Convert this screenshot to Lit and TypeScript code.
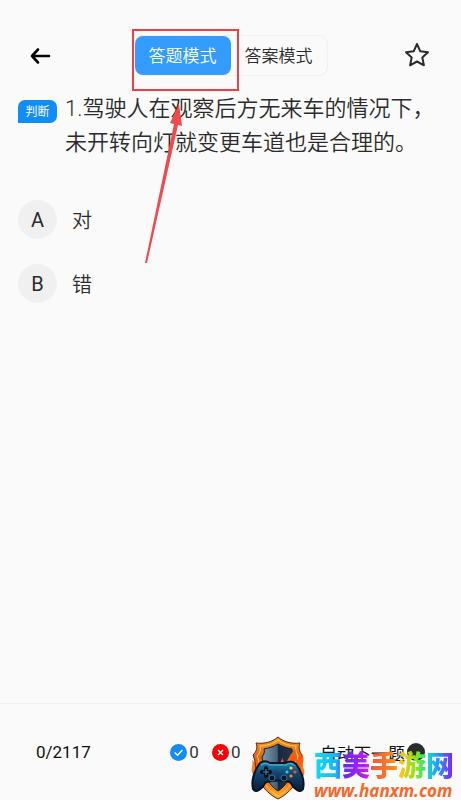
import { LitElement, html, css } from "lit";
import { customElement, state } from "lit/decorators.js";
import { classMap } from "lit/directives/class-map.js";

@customElement("site-mark")
class SiteMark extends LitElement {
  static styles = css`
    :host { display: flex; align-items: flex-end; gap: 8px; pointer-events: none; }
    svg { width: 56px; height: 64px; flex: none; }
    .words { display: flex; flex-direction: column; align-items: flex-start; gap: 1px; }
    .name {
      font: 900 28px/34px "Noto Sans CJK SC", sans-serif;
      white-space: nowrap;
      color: transparent;
      background: linear-gradient(90deg, #08dff5 0%, #12b9f7 16%, #5e2cf0 21%, #c01cf2 37%, #f5583a 42%, #ff8a1c 57%, #ffc21a 62%, #7be81c 74%, #19d8c8 81%, #1aa0ff 88%, #7a2cf5 98%);
      -webkit-background-clip: text;
      background-clip: text;
    }
    .url { font: italic 700 17px/18px "Open Sans", "Noto Sans", sans-serif; color: #f4682a; }
  `;
  render() {
    return html`
      <svg viewBox="0 0 56 64" aria-hidden="true">
        <defs>
          <linearGradient id="rim" x1="0" y1="0" x2="0" y2="1">
            <stop offset="0" stop-color="#ff9a24" /><stop offset=".35" stop-color="#d9601a" />
            <stop offset=".75" stop-color="#ff7a12" /><stop offset="1" stop-color="#ffb52c" />
          </linearGradient>
          <linearGradient id="steel" x1="0" y1="0" x2="1" y2="0">
            <stop offset="0" stop-color="#7f9db0" /><stop offset=".48" stop-color="#466277" />
            <stop offset=".5" stop-color="#152a40" /><stop offset="1" stop-color="#22384c" />
          </linearGradient>
          <linearGradient id="pad" x1="0" y1="0" x2="0" y2="1">
            <stop offset="0" stop-color="#2688b8" /><stop offset=".4" stop-color="#12466e" /><stop offset="1" stop-color="#0b1c38" />
          </linearGradient>
        </defs>
        <path d="M4 40C-1 34 4 30 2 24c5 4 4 8 8 10L46 32c4-2 4-6 7-8-2 7 4 10 0 17l-7 10H10Z" fill="#ff7a1a" />
        <path d="M28 1c6 5 13 7 22 6-2 5 0 9 2 12-2 6-1 15-4 23C44 52 36 59 28 63 20 59 12 52 8 42 5 34 6 25 3 19c3-3 5-7 3-12 9 1 16-1 22-6Z" fill="url(#rim)" stroke="#5a2416" />
        <path d="M28 4c5 4 12 6 18 6-1 4 0 7 2 10-2 5-1 14-4 21-3 9-9 15-16 19-7-4-13-10-16-19C9 34 10 25 7 20c3-3 4-6 3-10 6 0 13-2 18-6Z" fill="none" stroke="#ffd063" />
        <path d="M28 8c5 3 9 4 14 5 0 3 1 6 2 8-2 6-1 13-4 20-3 6-7 11-12 14-5-3-9-8-12-14-3-7-2-14-4-20 2-3 3-5 2-8 5-1 9-2 14-5Z" fill="url(#steel)" stroke="#18212d" />
        <path d="M25 34c0-6 7-6 7-12 2 3 2 5 1 7 6-3 4-9 13-16-2 6 2 7 1 11 3-1 4-3 5-6 4 7-1 12-2 17Z" fill="#f65d10" />
        <path d="M32 34c1-5 6-4 7-11 2 4 0 6 1 8 3-1 3-4 6-6 0 4 0 6-3 9Z" fill="#ffc232" />
        <path d="M10 27c3-2 7-2 10 0h15c4-2 8-2 11 1 5 7 9 17 7 25-3 5-9 0-13-7-7-2-16-2-24 0-4 7-10 12-13 7-2-9 2-19 7-26Z" fill="url(#pad)" stroke="#0a1428" stroke-width="2" />
        <path d="M11 29c3-2 6-2 9 0h16c3-2 7-2 9 1" fill="none" stroke="#49bde0" />
        <path d="M16 32v8M12 36h8" stroke="#081426" stroke-width="4" stroke-linecap="round" />
        <path d="M16 33v6M13 36h6" stroke="#5b8298" />
        <circle cx="22" cy="42" r="3" fill="#081426" stroke="#35738f" />
        <circle cx="34" cy="42" r="3" fill="#081426" stroke="#35738f" />
        <circle cx="41" cy="32" r="1.6" fill="#ffd23c" /><circle cx="45" cy="36" r="1.6" fill="#ff4b28" />
        <circle cx="37" cy="36" r="1.6" fill="#34c8f0" /><circle cx="41" cy="40" r="1.6" fill="#ff8a22" />
      </svg>
      <div class="words"><span class="name">西美手游网</span><span class="url">www.hanxm.com</span></div>
    `;
  }
}

@customElement("app-root")
class AppRoot extends LitElement {
  @state() private mode = 0;

  static styles = css`
    :host {
      display: flex; flex-direction: column; min-height: 100vh; box-sizing: border-box;
      background: #fafafa; color: #2b2b2b;
      font-family: Roboto, "Noto Sans CJK SC", sans-serif; font-weight: 400;
    }
    button { font: inherit; color: inherit; border: 0; background: none; padding: 0; margin: 0; }
    svg { display: block; }
    header {
      display: grid; grid-template-columns: 1fr auto 1fr; align-items: center;
      padding: 35px 30px 0;
    }
    .icon { width: 28px; height: 28px; }
    .star { justify-self: end; }
    .tabs {
      position: relative; display: flex; border: 1px solid #f1f1f1; border-radius: 9px;
    }
    .tab { width: 96px; height: 39px; border-radius: 8px; font-size: 17px; line-height: 40px; font-weight: 350; }
    .tab.on { background: #359cff; color: #fff; }
    .frame {
      position: absolute; left: -3px; top: -7px; width: 103px; height: 58px;
      border: 2px solid #ee4146; pointer-events: none;
    }
    .pointer { position: absolute; left: 9px; top: 65px; pointer-events: none; z-index: 1; }
    .question { display: flex; align-items: flex-start; gap: 8px; padding: 16px 20px 0 18px; }
    .kind {
      flex: none; width: 39px; height: 23px; margin-top: 8px; box-sizing: border-box;
      border-radius: 7px 7px 7px 0; background: #0f8df8; color: #fff;
      font-size: 12px; line-height: 24px; text-align: center;
    }
    h1 { margin: 0; font-size: 22px; line-height: 34px; font-weight: 350; }
    .options { display: flex; flex-direction: column; gap: 25px; margin: 0; padding: 40px 18px; border: 0; }
    .option { display: flex; align-items: center; gap: 15px; font-size: 20px; font-weight: 350; }
    .option input {
      appearance: none; position: absolute; width: 39px; height: 39px; margin: 0; border-radius: 50%;
    }
    .letter {
      width: 39px; height: 39px; border-radius: 50%; background: #f0f0f0;
      line-height: 40px; text-align: center; font-weight: 400;
    }
    footer {
      position: relative; display: flex; align-items: center; justify-content: space-between;
      height: 96px; margin-top: auto; padding: 0 36px; border-top: 1px solid #f0f0f0;
      font-size: 17px; color: #111;
    }
    .tally { display: flex; gap: 13px; color: #333; }
    .count { display: flex; align-items: center; gap: 2px; }
    .auto { display: flex; align-items: center; gap: 2px; }
    .auto input {
      appearance: none; width: 18px; height: 18px; margin: 0; border-radius: 50%; background: #2b2b2b;
    }
    site-mark { position: absolute; right: 7px; bottom: 0; }
  `;

  render() {
    return html`
      <header>
        <button class="icon" aria-label="返回">
          <svg width="22" height="28" viewBox="0 0 22 28" fill="none" stroke="#080808" stroke-width="2.6" stroke-linecap="round" stroke-linejoin="round">
            <path d="M19 14H2M8 7.5L2 14L8 20.5" />
          </svg>
        </button>
        <div class="tabs">
          ${["答题模式", "答案模式"].map((t, i) => html`
            <button class=${classMap({ tab: true, on: this.mode === i })} @click=${() => (this.mode = i)}>${t}</button>`)}
          <span class="frame"></span>
          <svg class="pointer" width="42" height="166" viewBox="0 0 42 166" aria-hidden="true">
            <path d="M1 162L30 23L26 22L35 3L38 25L34 24L3 162Z" fill="#ee4a4f" />
          </svg>
        </div>
        <button class="icon star" aria-label="收藏">
          <svg width="28" height="28" viewBox="0 0 28 28" fill="none" stroke="#2b2b2b" stroke-width="2" stroke-linejoin="round">
            <path d="M14 2L17.3 9.3L25 10.2L19.3 15.4L20.9 23.3L14 19.5L7.1 23.3L8.7 15.4L3 10.2L10.7 9.3Z" />
          </svg>
        </button>
      </header>
      <section class="question">
        <span class="kind">判断</span>
        <h1>1.驾驶人在观察后方无来车的情况下，未开转向灯就变更车道也是合理的。</h1>
      </section>
      <fieldset class="options" aria-label="选项">
        ${[["A", "对"], ["B", "错"]].map(([k, t]) => html`
          <label class="option"><input type="radio" name="answer" value=${k} /><span class="letter">${k}</span><span>${t}</span></label>`)}
      </fieldset>
      <footer>
        <span>0/2117</span>
        <div class="tally">
          <span class="count">
            <svg width="17" height="17" viewBox="0 0 17 17" fill="none" stroke="#fff" stroke-width="1.4"><circle cx="8.5" cy="8.5" r="8.5" fill="#158cf2" stroke="none" /><path d="M4.7 8.5L7.5 11.2L12.5 6" /></svg>0
          </span>
          <span class="count">
            <svg width="17" height="17" viewBox="0 0 17 17" fill="none" stroke="#fff" stroke-width="1.4"><circle cx="8.5" cy="8.5" r="8.5" fill="#fb0007" stroke="none" /><path d="M6 6L11 11M11 6L6 11" /></svg>0
          </span>
        </div>
        <label class="auto">自动下一题<input type="checkbox" /></label>
        <site-mark></site-mark>
      </footer>
    `;
  }
}
